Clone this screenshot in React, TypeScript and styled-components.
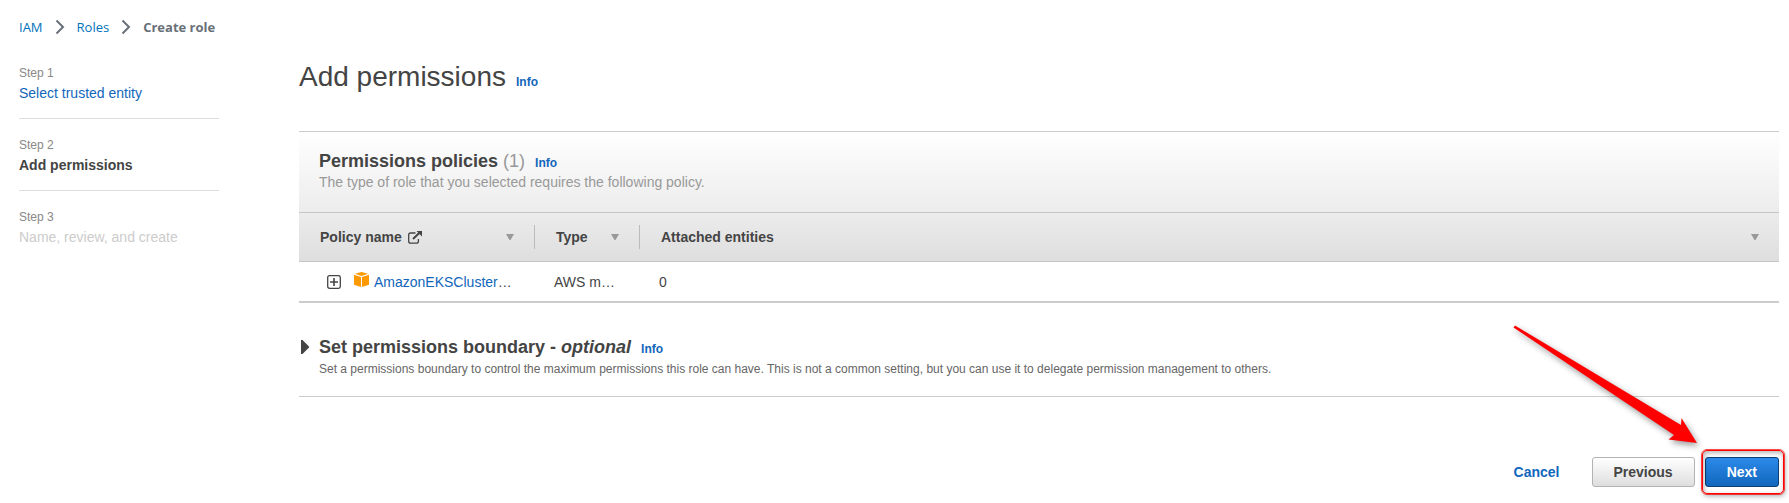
import React from "react";
import styled, { createGlobalStyle, css } from "styled-components";

const GlobalStyle = createGlobalStyle`
  *, *::before, *::after { box-sizing: border-box; }
  body {
    margin: 0;
    background: #fff;
    color: #444;
    font: 14px/20px "Liberation Sans", Arial, sans-serif;
  }
  a { color: #1166bb; text-decoration: none; }
  a:hover { text-decoration: underline; }
  button { font-family: inherit; cursor: pointer; }
`;

const Page = styled.div`
  padding: 16px 10px 16px 19px;
`;

const Breadcrumbs = styled.nav`
  display: flex;
  align-items: center;
  gap: 12px;
  height: 22px;
  font-family: "Open Sans", "Noto Sans", sans-serif;
  font-size: 13px;
  a { color: #0073bb; }
`;

const Current = styled.span`
  color: #687078;
  font-weight: 700;
`;

const Columns = styled.div`
  display: grid;
  grid-template-columns: 200px minmax(0, 1fr);
  column-gap: 80px;
  margin-top: 21px;
`;

const Steps = styled.ol`
  margin: 0;
  padding: 6px 0 0;
  list-style: none;
`;

const Step = styled.li`
  display: flex;
  flex-direction: column;
  gap: 2px;
  & + & { margin-top: 18px; }
  &:not(:last-child) {
    padding-bottom: 15px;
    border-bottom: 1px solid #ddd;
  }
`;

const StepNumber = styled.span`
  color: #888;
  font-size: 12px;
  line-height: 16px;
`;

const StepName = styled.span<{ $active?: boolean }>`
  color: ${(p) => (p.$active ? "#444" : "#ccc")};
  font-weight: ${(p) => (p.$active ? 700 : 400)};
`;

const PageTitle = styled.h1`
  margin: 0 0 36px;
  font-size: 28px;
  line-height: 36px;
  font-weight: 400;
`;

const InfoLink = styled.a`
  margin-left: 10px;
  font-size: 12px;
  line-height: 12px;
  font-style: normal;
  font-weight: 700;
`;

const PanelHeader = styled.header`
  padding: 18px 20px 20px;
  border-top: 1px solid #ccc;
  border-bottom: 1px solid #c5c5c5;
  background: linear-gradient(#fff, #ececec);
`;

const SectionTitle = styled.h2`
  margin: 0;
  font-size: 18px;
  line-height: 22px;
  font-weight: 700;
`;

const Count = styled.span`
  color: #999;
  font-weight: 400;
`;

const Description = styled.p`
  margin: 0;
  color: #999;
`;

const PolicyTable = styled.table`
  width: 100%;
  border-collapse: separate;
  border-spacing: 0;
  table-layout: fixed;
  border-bottom: 2px solid #ccc;
`;

const HeadCell = styled.th<{ $width?: number }>`
  ${(p) => p.$width && css`width: ${p.$width}px;`}
  height: 49px;
  padding: 0;
  border-bottom: 1px solid #c5c5c5;
  background: linear-gradient(#ececec, #dedede);
  text-align: left;
`;

const HeadContent = styled.div`
  display: flex;
  align-items: center;
  gap: 6px;
  height: 24px;
  padding: 0 20px 0 21px;
  th:not(:last-child) > & { border-right: 1px solid #bbb; }
`;

const SortButton = styled.button`
  display: flex;
  margin-left: auto;
  padding: 0;
  border: 0;
  background: none;
  color: #999;
`;

const Cell = styled.td`
  height: 39px;
  padding: 0 19px;
  white-space: nowrap;
`;

const PolicyCell = styled.div`
  display: flex;
  align-items: center;
  padding-left: 9px;
`;

const ExpandButton = styled.button`
  display: flex;
  margin-right: 13px;
  padding: 0;
  border: 0;
  background: none;
  color: #444;
`;

const PolicyIcon = styled.svg`
  margin: 0 5px 4px 0;
`;

const Boundary = styled.section`
  display: grid;
  grid-template-columns: 20px minmax(0, 1fr);
  margin-top: 33px;
  padding-bottom: 16px;
  border-bottom: 1px solid #ccc;
`;

const Disclosure = styled.button`
  display: flex;
  align-items: center;
  height: 22px;
  padding: 0 0 0 2px;
  border: 0;
  background: none;
  color: #444;
`;

const Hint = styled.p`
  margin: 0;
  color: #666;
  font-size: 12px;
  line-height: 22px;
`;

const Actions = styled.footer`
  display: flex;
  justify-content: flex-end;
  align-items: center;
  gap: 10px;
  margin-top: 60px;
`;

const Button = styled.button<{ $kind: "link" | "plain" | "primary" }>`
  height: 30px;
  padding: 0 21px;
  border: 1px solid transparent;
  border-radius: 3px;
  font-size: 14px;
  line-height: 20px;
  font-weight: 700;
  ${(p) =>
    p.$kind === "link" &&
    css`
      background: none;
      color: #1166bb;
    `}
  ${(p) =>
    p.$kind === "plain" &&
    css`
      border-color: #b3b3b3;
      background: linear-gradient(#fff, #dedede);
      color: #444;
    `}
  ${(p) =>
    p.$kind === "primary" &&
    css`
      border-color: #0b3f73;
      background: linear-gradient(#2c8aea, #1166bb);
      color: #fff;
    `}
`;

const Highlighted = styled.div`
  position: relative;
  display: flex;
`;

const HighlightBox = styled.div`
  position: absolute;
  inset: -7px -5px -7px -3px;
  border: 1px solid #f00;
  outline: 1px solid rgba(255, 0, 0, 0.7);
  border-radius: 5px;
  box-shadow: 1px 2px 5px rgba(0, 0, 0, 0.35), inset 1px 2px 5px rgba(0, 0, 0, 0.3);
  pointer-events: none;
`;

const Arrow = styled.svg`
  position: absolute;
  right: 82px;
  bottom: 44px;
  overflow: visible;
  filter: drop-shadow(2px 3px 3px rgba(0, 0, 0, 0.4));
  pointer-events: none;
`;

const Chevron = () => (
  <svg width="10" height="16" viewBox="0 0 10 16" fill="none" aria-hidden="true">
    <path d="M1.5 1.5 8 8 1.5 14.5" stroke="#687078" strokeWidth="2" />
  </svg>
);

const Sort = ({ label }: { label: string }) => (
  <SortButton aria-label={`Sort by ${label}`}>
    <svg width="8" height="6" viewBox="0 0 8 6">
      <path d="M0 0h8L4.5 6h-1z" fill="currentColor" />
    </svg>
  </SortButton>
);

const ExternalIcon = () => (
  <svg width="14" height="13" viewBox="0 0 14 13" fill="none" aria-hidden="true">
    <path d="M7.5 2H2.5Q.7 2 .7 3.8v6.5q0 1.9 1.8 1.9h6q1.9 0 1.9-1.9V8" stroke="#444" strokeWidth="1.3" />
    <path d="M5 8 11.5 1.8" stroke="#444" strokeWidth="2" />
    <path d="M8.5 0H14v5.5z" fill="#444" />
  </svg>
);

const Info = () => <InfoLink href="#info">Info</InfoLink>;

export default function App() {
  return (
    <Page>
      <GlobalStyle />
      <Breadcrumbs aria-label="Breadcrumb">
        <a href="#iam">IAM</a>
        <Chevron />
        <a href="#roles">Roles</a>
        <Chevron />
        <Current aria-current="page">Create role</Current>
      </Breadcrumbs>
      <Columns>
        <Steps>
          <Step>
            <StepNumber>Step 1</StepNumber>
            <a href="#step-1">Select trusted entity</a>
          </Step>
          <Step>
            <StepNumber>Step 2</StepNumber>
            <StepName $active>Add permissions</StepName>
          </Step>
          <Step>
            <StepNumber>Step 3</StepNumber>
            <StepName>Name, review, and create</StepName>
          </Step>
        </Steps>
        <main>
          <PageTitle>
            Add permissions
            <Info />
          </PageTitle>
          <section>
            <PanelHeader>
              <SectionTitle>
                Permissions policies <Count>(1)</Count>
                <Info />
              </SectionTitle>
              <Description>The type of role that you selected requires the following policy.</Description>
            </PanelHeader>
            <PolicyTable>
              <thead>
                <tr>
                  <HeadCell $width={236}>
                    <HeadContent>
                      Policy name
                      <ExternalIcon />
                      <Sort label="policy name" />
                    </HeadContent>
                  </HeadCell>
                  <HeadCell $width={105}>
                    <HeadContent>
                      Type
                      <Sort label="type" />
                    </HeadContent>
                  </HeadCell>
                  <HeadCell>
                    <HeadContent>
                      Attached entities
                      <Sort label="attached entities" />
                    </HeadContent>
                  </HeadCell>
                </tr>
              </thead>
              <tbody>
                <tr>
                  <Cell>
                    <PolicyCell>
                      <ExpandButton aria-label="Expand policy">
                        <svg width="14" height="14" viewBox="0 0 14 14" fill="none" stroke="currentColor">
                          <rect x=".7" y=".7" width="12.6" height="12.6" rx="1.8" strokeWidth="1.3" />
                          <path d="M7 3v8M3 7h8" strokeWidth="1.6" />
                        </svg>
                      </ExpandButton>
                      <PolicyIcon width="15" height="15" viewBox="0 0 15 15" fill="#f90" aria-hidden="true">
                        <path d="M1 1.8 7.5 0 14 1.8 7.5 4z" />
                        <path d="M0 2.8 7 5v10L0 12.7zM15 2.8 8 5v10l7-2.3z" />
                      </PolicyIcon>
                      <a href="#policy">AmazonEKSCluster</a>…
                    </PolicyCell>
                  </Cell>
                  <Cell>AWS m…</Cell>
                  <Cell>0</Cell>
                </tr>
              </tbody>
            </PolicyTable>
          </section>
          <Boundary>
            <Disclosure aria-label="Set permissions boundary" aria-expanded={false}>
              <svg width="8" height="14" viewBox="0 0 8 14">
                <path d="M0 0h1.5L8 6.5v1L1.5 14H0z" fill="currentColor" />
              </svg>
            </Disclosure>
            <div>
              <SectionTitle>
                Set permissions boundary - <em>optional</em>
                <Info />
              </SectionTitle>
              <Hint>
                Set a permissions boundary to control the maximum permissions this role can have. This is not a common
                setting, but you can use it to delegate permission management to others.
              </Hint>
            </div>
          </Boundary>
          <Actions>
            <Button $kind="link">Cancel</Button>
            <Button $kind="plain">Previous</Button>
            <Highlighted>
              <Button $kind="primary">Next</Button>
              <HighlightBox />
              <Arrow width="193" height="126" viewBox="0 0 193 126" aria-hidden="true">
                <path d="M9.5 10.5 11 8.500 177 108 177.500 101 193 126 164.500 122.500 170 118z" fill="#f00" />
              </Arrow>
            </Highlighted>
          </Actions>
        </main>
      </Columns>
    </Page>
  );
}
